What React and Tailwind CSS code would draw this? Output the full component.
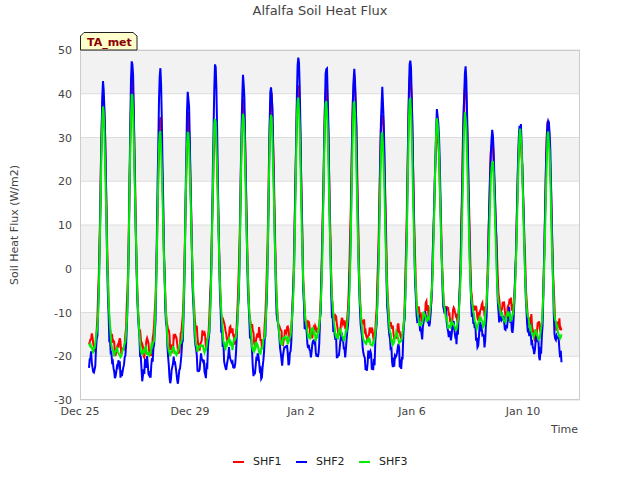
import React from "react";

const peaks = [103,132,160,188,215,243,271,298,326,354,382,410,437,465,492,520,548];
const h2 = [42,46,43,39,44,42,41,47,46,46,40,48,37,46,33,35,37];
const h1 = [40,43,33,34,33,38,40,43,43,45,37,46,33,44,30,33,35];
const h3 = [36,39,31,31,34,35,35,39,38,37,30,38,34,35,25,32,31];
const n2 = [-22,-23,-23,-23,-22,-21,-22,-19,-18,-18,-21,-20,-12,-14,-15,-12,-18];
const n1 = [-17,-18,-18,-17,-16,-15,-16,-15,-14,-13,-15,-15,-10,-11,-10,-9,-14];
const n3 = [-18,-19,-19,-19,-18,-17,-18,-16,-15,-15,-17,-16,-11,-13,-12,-11,-15];

function rnd(i, s) {
  const x = Math.sin(i * 12.9898 + s * 78.233) * 43758.5453;
  return x - Math.floor(x);
}
const Y = (v) => 50 + (50 - v) * 4.375;

function series(H, N, s, amp) {
  const pts = [];
  let k = 0;
  for (let x = 89; x <= 562; x += 0.7) {
    k++;
    let i = 0, d = 1e9;
    peaks.forEach((p, j) => { if (Math.abs(x - p) < Math.abs(d)) { d = x - p; i = j; } });
    const night = N[i] + (d > 0 && i + 1 < N.length ? (N[i + 1] - N[i]) * Math.min(1, d / 14) : 0);
    const w = d < 0 ? 3.6 : 4.4;
    let v = night + (H[i] - night) * Math.exp(-((d / w) ** 2));
    v += (rnd(k, s) - 0.5) * amp + Math.sin(x * 0.9 + s) * amp * 0.6;
    pts.push(`${x.toFixed(1)},${Y(v).toFixed(1)}`);
  }
  return pts.join(" ");
}

const s1 = series(h1, n1, 1, 2.5);
const s2 = series(h2, n2, 2, 3.5);
const s3 = series(h3, n3, 3, 1.5);

export default function App() {
  const yt = [50, 40, 30, 20, 10, 0, -10, -20, -30];
  const xt = [["Dec 25", 80], ["Dec 29", 190], ["Jan 2", 301], ["Jan 6", 412], ["Jan 10", 523]];
  return (
    <div className="w-[640px] h-[480px] bg-white relative" style={{ fontFamily: "'DejaVu Sans', sans-serif" }}>
      <svg width="640" height="480" className="absolute left-0 top-0">
        <text x="320" y="15" textAnchor="middle" fontSize="13" fill="#444">Alfalfa Soil Heat Flux</text>
        <rect x="80" y="50" width="500" height="350" fill="#fff" />
        {[50, 30, 10, -10].map((v) => (
          <rect key={v} x="80" y={Y(v)} width="500" height="43.75" fill="#f2f2f2" />
        ))}
        {yt.map((v) => (
          <g key={v}>
            <line x1="80" x2="580" y1={Y(v)} y2={Y(v)} stroke="#ddd" strokeWidth="1" />
            <text x="72" y={Y(v) + 4} textAnchor="end" fontSize="11" fill="#444">{v}</text>
          </g>
        ))}
        <rect x="80.5" y="50.5" width="499" height="349" fill="none" stroke="#ccc" />
        {xt.map(([l, x]) => (
          <text key={l} x={x} y="415" textAnchor="middle" fontSize="11" fill="#444">{l}</text>
        ))}
        <text x="578" y="433" textAnchor="end" fontSize="11" fill="#444">Time</text>
        <text transform="translate(18,225) rotate(-90)" textAnchor="middle" fontSize="11" fill="#444">Soil Heat Flux (W/m2)</text>
        <polyline points={s1} fill="none" stroke="#ff0000" strokeWidth="2" />
        <polyline points={s2} fill="none" stroke="#0000ff" strokeWidth="2" />
        <polyline points={s3} fill="none" stroke="#00ee00" strokeWidth="2" />
        <path d="M80.5,50 L80.5,36 L84,32.5 L133,32.5 L137,36 L137,50 Z" fill="#ffffcc" stroke="#222" />
        <text x="87" y="46" fontSize="11" fontWeight="bold" fill="#8b0000">TA_met</text>
        {[["SHF1", "#ff0000", 233], ["SHF2", "#0000ff", 296], ["SHF3", "#00ee00", 359]].map(([l, c, x]) => (
          <g key={l}>
            <line x1={x} x2={x + 11} y1="462" y2="462" stroke={c} strokeWidth="2" />
            <text x={x + 20} y="465" fontSize="11" fill="#222">{l}</text>
          </g>
        ))}
      </svg>
    </div>
  );
}
